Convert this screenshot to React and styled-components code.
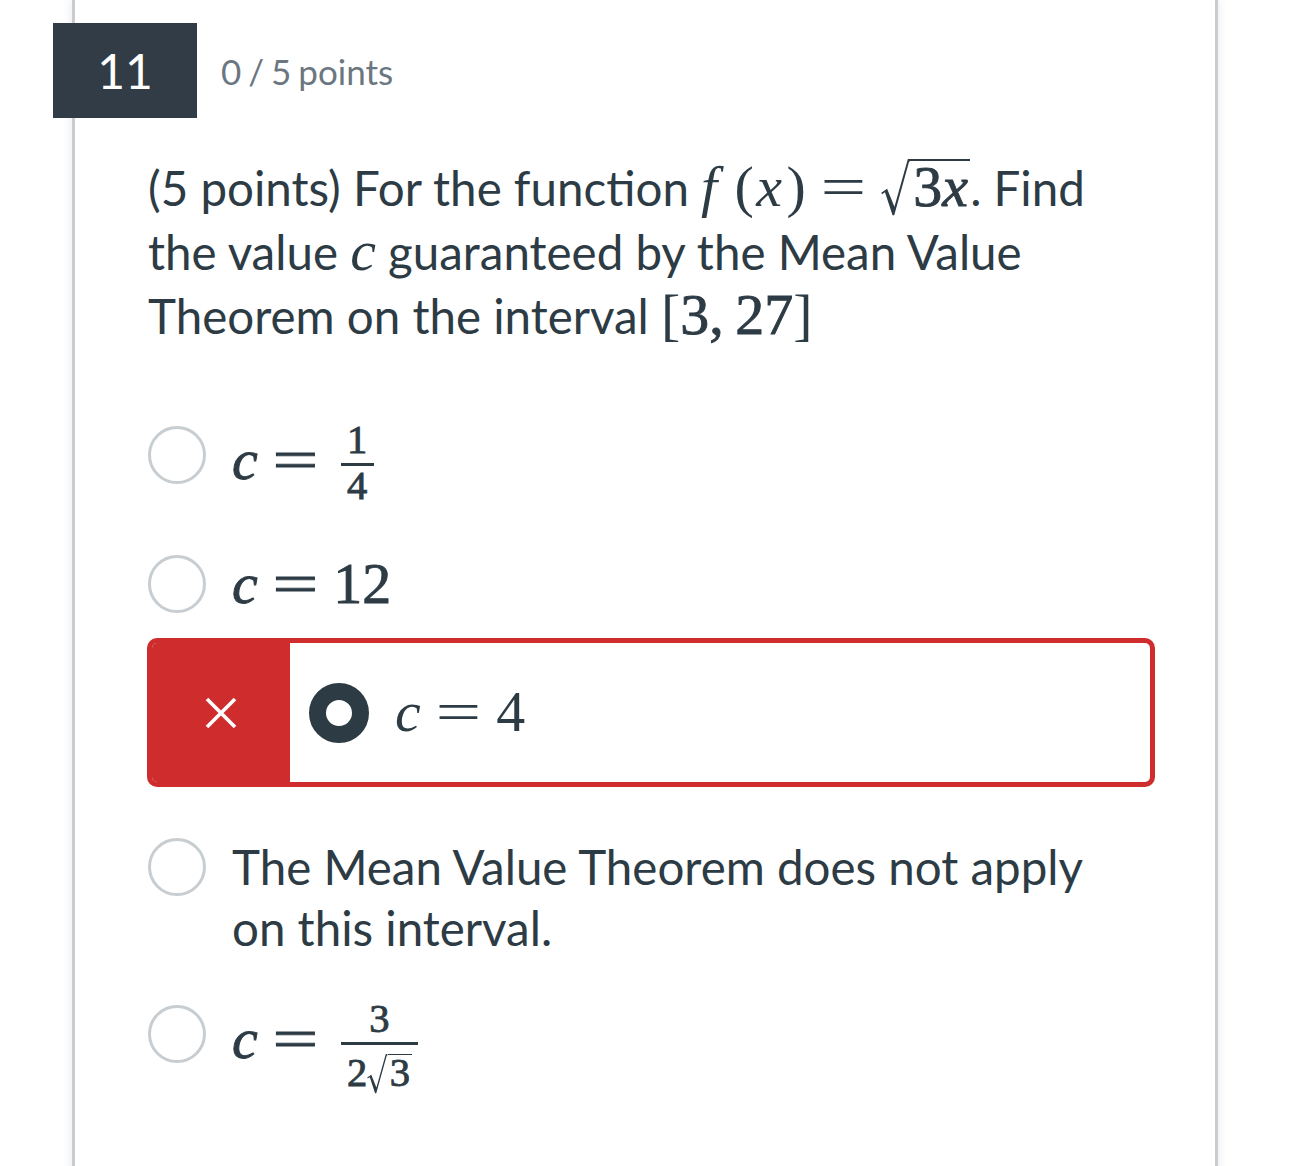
import React from "react";
import styled, { createGlobalStyle } from "styled-components";

const INK = "#2d3b45";
const RED = "#cf2c2d";
const LINE = "#c8cdd1";

const GlobalStyle = createGlobalStyle`
  html, body {
    margin: 0;
    padding: 0;
    background: #fff;
  }
  body {
    font-family: Lato, "Noto Sans", sans-serif;
    color: ${INK};
    overflow: hidden;
  }
`;

const Card = styled.section`
  box-sizing: border-box;
  margin-left: 72px;
  width: 1146px;
  min-height: 1240px;
  padding: 23px 60px 0 73px;
  border-left: 3px solid ${LINE};
  border-right: 3px solid ${LINE};
  box-shadow: 0 0 9px rgba(0, 0, 0, 0.1);
  background: #fff;
`;

const Header = styled.header`
  display: flex;
  align-items: center;
  gap: 24px;
  margin-left: -95px;
`;

const Badge = styled.div`
  width: 144px;
  height: 95px;
  display: flex;
  align-items: center;
  justify-content: center;
  background: #313c46;
  color: #fff;
  font-size: 48px;
`;

const Points = styled.span`
  font-size: 35px;
  word-spacing: -2px;
  color: #6b7780;
`;

const Question = styled.p`
  margin: 38px 40px 0 0;
  font-size: 47.5px;
  line-height: 64px;
`;

/* math bits */
const MathSpan = styled.span`
  font-family: "Liberation Serif", "DejaVu Serif", serif;
  font-size: 1.22em;
  line-height: 1;
  white-space: nowrap;
  ${({ $heavy }) => $heavy && "-webkit-text-stroke: 0.9px currentColor;"}
`;

const Var = styled.i`
  font-style: italic;
  margin: 0 ${({ $gap }) => $gap || "0"} 0 ${({ $lead }) => $lead || "0"};
`;

const Rel = styled.span`
  display: inline-block;
  margin: 0 0.37em;
  transform: scaleX(1.4);
`;

const Heavy = styled.span`
  -webkit-text-stroke: 0.9px currentColor;
`;

const Sqrt = styled.span`
  position: relative;
  display: inline-block;
  line-height: 0.88em;
  padding-left: 0.5em;
`;

const RadicalSvg = styled.svg`
  position: absolute;
  left: 0;
  top: 0;
  width: 0.5em;
  height: 0.97em;
  overflow: visible;
`;

const Radicand = styled.span`
  display: inline-block;
  line-height: 0.88em;
  border-top: 0.045em solid currentColor;
  padding: 0 0.04em 0 0.05em;
`;

const Frac = styled.span`
  display: inline-flex;
  flex-direction: column;
  align-items: stretch;
  font-size: 0.7em;
  line-height: 1;
  vertical-align: 0.64em;
  margin-left: 0.18em;
`;

const Num = styled.span`
  text-align: center;
  padding: 0 0.16em 0.07em;
`;

const Bar = styled.span`
  height: 0.065em;
  background: currentColor;
`;

const Den = styled.span`
  text-align: center;
  padding: ${({ $pad }) => $pad || "0"} 0.16em 0;
`;

const Radical = () => (
  <RadicalSvg viewBox="0 0 27.6 56" preserveAspectRatio="none">
    <polygon
      fill="currentColor"
      points="0.3,33.6 5.8,29.6 12.8,47.6 25.6,0 27.6,0 27.6,2.6 26.8,2.6 12.6,56 11,56 3.8,33.2 1,35"
    />
  </RadicalSvg>
);

/* answers */
const Answers = styled.div`
  display: flex;
  flex-direction: column;
  margin-top: 67px;
`;

const Row = styled.div`
  display: flex;
  align-items: ${({ $top }) => ($top ? "flex-start" : "center")};
  height: ${({ $h }) => $h}px;
  margin-top: ${({ $mt }) => $mt || 0}px;
  padding-right: 40px;
`;

const Radio = styled.span`
  box-sizing: border-box;
  flex-shrink: 0;
  width: 58px;
  height: 58px;
  margin-top: ${({ $top }) => ($top ? "2px" : "0")};
  border-radius: 50%;
  border: 3px solid ${LINE};
  background: #fff;
`;

const Label = styled.div`
  margin-left: 26px;
  margin-top: ${({ $drop }) => $drop || 0}px;
  font-size: 47.5px;
  line-height: 61px;
`;

const Picked = styled.div`
  box-sizing: border-box;
  display: flex;
  align-items: center;
  height: 149px;
  margin: 14px 0 0 -1px;
  border: 5px solid ${RED};
  border-radius: 10px;
  overflow: hidden;
`;

const WrongCell = styled.div`
  align-self: stretch;
  width: 138px;
  display: flex;
  align-items: center;
  justify-content: center;
  background: ${RED};
`;

const PickedRadio = styled.span`
  box-sizing: border-box;
  width: 60px;
  height: 60px;
  margin-left: 19px;
  border-radius: 50%;
  border: 17px solid ${INK};
  background: #fff;
`;

const Cross = () => (
  <svg width="32" height="32" viewBox="0 0 32 32">
    <path d="M2 2 L30 30 M30 2 L2 30" stroke="#fff" strokeWidth="3.6" />
  </svg>
);

export default function App() {
  return (
    <>
      <GlobalStyle />
      <Card>
        <Header>
          <Badge>11</Badge>
          <Points>0 / 5 points</Points>
        </Header>

        <Question>
          (5 points) For the function{" "}
          <MathSpan>
            <Var $gap="0.3em">f</Var>(<Var $lead="0.04em" $gap="0.08em">x</Var>)<Rel>=</Rel>
            <Sqrt>
              <Radical />
              <Radicand>
                <Heavy>
                  3<Var>x</Var>
                </Heavy>
              </Radicand>
            </Sqrt>
          </MathSpan>
          . Find the value{" "}
          <MathSpan>
            <Var>c</Var>
          </MathSpan>{" "}
          guaranteed by the Mean Value Theorem on the interval{" "}
          <MathSpan>
            [<Heavy>3,{"\u2009"}27</Heavy>]
          </MathSpan>
        </Question>

        <Answers>
          <Row $h={80}>
            <Radio />
            <Label $drop={16}>
              <MathSpan $heavy>
                <Var>c</Var>
                <Rel>=</Rel>
                <Frac>
                  <Num>1</Num>
                  <Bar />
                  <Den>4</Den>
                </Frac>
              </MathSpan>
            </Label>
          </Row>

          <Row $h={80} $mt={49}>
            <Radio />
            <Label>
              <MathSpan $heavy>
                <Var>c</Var>
                <Rel>=</Rel>12
              </MathSpan>
            </Label>
          </Row>

          <Picked>
            <WrongCell>
              <Cross />
            </WrongCell>
            <PickedRadio />
            <Label>
              <MathSpan>
                <Var>c</Var>
                <Rel>=</Rel>4
              </MathSpan>
            </Label>
          </Picked>

          <Row $h={122} $mt={49} $top>
            <Radio $top />
            <Label>The Mean Value Theorem does not apply on this interval.</Label>
          </Row>

          <Row $h={80} $mt={36}>
            <Radio />
            <Label $drop={24}>
              <MathSpan $heavy>
                <Var>c</Var>
                <Rel>=</Rel>
                <Frac>
                  <Num>3</Num>
                  <Bar />
                  <Den $pad="0.2em">
                    2
                    <Sqrt>
                      <Radical />
                      <Radicand>3</Radicand>
                    </Sqrt>
                  </Den>
                </Frac>
              </MathSpan>
            </Label>
          </Row>
        </Answers>
      </Card>
    </>
  );
}
